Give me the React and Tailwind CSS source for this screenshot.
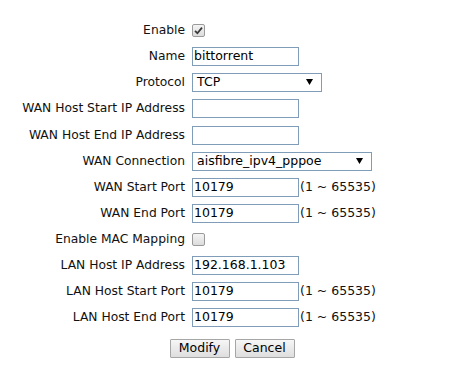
import React from "react";

const font = { fontFamily: '"DejaVu Sans", Verdana, sans-serif' };

function Check({ checked }) {
  return (
    <div className="w-[13px] h-[13px] rounded-[2px] border border-[#9a9a9a] bg-gradient-to-b from-[#f4f4f4] to-[#dcdcdc] flex items-center justify-center">
      {checked && (
        <svg width="9" height="9" viewBox="0 0 9 9">
          <path d="M1 4.8 L3.4 7.2 L8 1.6" fill="none" stroke="#3a3a3a" strokeWidth="1.8" />
        </svg>
      )}
    </div>
  );
}

function Input({ value }) {
  return (
    <div className="w-[107px] h-[19px] border border-[#7f9db9] bg-white flex items-center pl-[1px] text-[12.5px] text-black leading-none">
      {value}
    </div>
  );
}

function Select({ value, w }) {
  return (
    <div className={`${w} h-[19px] border border-[#7f9db9] bg-white flex items-center justify-between pl-[4px] pr-[8px] text-[12.5px] text-black leading-none`}>
      <span>{value}</span>
      <svg width="7" height="6" viewBox="0 0 7 6">
        <path d="M0 0 H7 L3.5 6 Z" fill="#000" />
      </svg>
    </div>
  );
}

function Row({ label, children, suffix, extra = "" }) {
  return (
    <div className={`h-[26px] flex items-center ${extra}`}>
      <div className="w-[186px] text-right pr-[1px] text-[12.3px] text-[#111]">{label}</div>
      <div className="pl-[6px] flex items-center">
        {children}
        {suffix && <span className="ml-[1px] text-[12.5px] text-[#111]">(1 ~ 65535)</span>}
      </div>
    </div>
  );
}

export default function App() {
  return (
    <div className="w-[460px] h-[375px] bg-white pt-[17px]" style={font}>
      <Row label="Enable">
        <Check checked />
      </Row>
      <Row label="Name">
        <Input value="bittorrent" />
      </Row>
      <Row label="Protocol">
        <Select value="TCP" w="w-[130px]" />
      </Row>
      <Row label="WAN Host Start IP Address">
        <Input value="" />
      </Row>
      <Row label="WAN Host End IP Address" extra="mt-[1px]">
        <Input value="" />
      </Row>
      <Row label="WAN Connection">
        <Select value="aisfibre_ipv4_pppoe" w="w-[180px]" />
      </Row>
      <Row label="WAN Start Port" suffix>
        <Input value="10179" />
      </Row>
      <Row label="WAN End Port" suffix>
        <Input value="10179" />
      </Row>
      <Row label="Enable MAC Mapping">
        <Check />
      </Row>
      <Row label="LAN Host IP Address">
        <Input value="192.168.1.103" />
      </Row>
      <Row label="LAN Host Start Port" suffix>
        <Input value="10179" />
      </Row>
      <Row label="LAN Host End Port" suffix>
        <Input value="10179" />
      </Row>
      <div className="mt-[9px] flex justify-center gap-[5px] pl-[4px]">
        <button className="w-[60px] h-[19px] border border-[#a6a6a6] rounded-[1px] bg-gradient-to-b from-[#f6f6f6] to-[#dedede] text-[12.5px] text-black leading-none">
          Modify
        </button>
        <button className="w-[60px] h-[19px] border border-[#a6a6a6] rounded-[1px] bg-gradient-to-b from-[#f6f6f6] to-[#dedede] text-[12.5px] text-black leading-none">
          Cancel
        </button>
      </div>
    </div>
  );
}
